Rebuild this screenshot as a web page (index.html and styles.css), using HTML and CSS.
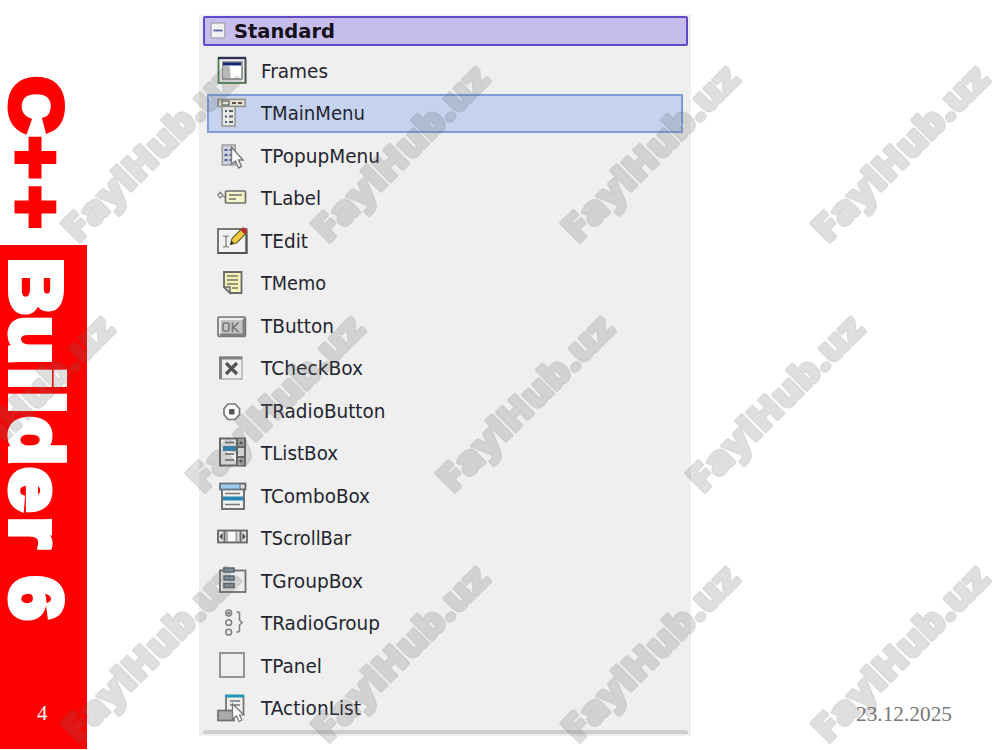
FILE: index.html
```html
<!DOCTYPE html>
<html lang="en">
<head>
<meta charset="utf-8">
<title>C++ Builder 6</title>
<link rel="stylesheet" href="styles.css">
</head>
<body>
<div class="slide">
  <aside class="side">
    <svg class="side-title" width="87" height="660" viewBox="0 0 87 660">
      <g transform="translate(11.300 0) rotate(90)">
        <text class="red" transform="scale(1.060 1)" x="72.300" y="0">C</text>
        <text class="red plus" x="136.300 185.800" y="0">++</text>
        <text class="white" transform="scale(1.080 1)" x="238.800 292.500 340.200 362.400 385.800 433.200 478.700 505 533.500" y="0">Builder 6</text>
      </g>
    </svg>
    <div class="page-no">4</div>
  </aside>
  <main class="palette">
    <div class="head">
      <svg width="16" height="18" viewBox="0 0 16 18"><rect x="1" y="1" width="14" height="15" rx="1" fill="#f1f0f2" stroke="#aaa7b5" stroke-width="1.6"/><path d="M3.5 8.5h9" stroke="#4b62a5" stroke-width="1.7"/></svg>
      <svg width="110" height="28"><text class="head-text" x="0" y="20.5" textLength="101" lengthAdjust="spacingAndGlyphs">Standard</text></svg>
    </div>
    <ul class="list">
      <li class="row">
        <svg class="icon" viewBox="0 0 32 32"><rect x="2.5" y="3" width="27" height="25" fill="#efefef" stroke="#4d7d50" stroke-width="1.8"/><path d="M2 3h28" stroke="#302f55" stroke-width="2.4"/><path d="M29.5 4v24" stroke="#555" stroke-width="1.6"/><rect x="7" y="7" width="19" height="17" fill="#fff" stroke="#777" stroke-width="1.4"/><path d="M7 7.5h18v3H7z" fill="#1d237c"/><path d="M7 11h7v12H7z" fill="#ccc"/></svg>
        <svg class="label"><text x="0" y="22" textLength="67" lengthAdjust="spacingAndGlyphs">Frames</text></svg>
      </li>
      <li class="row selected">
        <svg class="icon" viewBox="0 0 32 32"><rect x="6.2" y="8" width="13" height="20" fill="#e9e9e6" stroke="#999" stroke-width="1.6"/><rect x="2.2" y="1.4" width="27" height="7" fill="#e4e2d4" stroke="#918f86" stroke-width="1.6"/><rect x="6" y="3" width="7" height="4" fill="#d9e7d5" stroke="#59635a" stroke-width="1.2"/><path d="M16 5h4m2 0h4" stroke="#63544b" stroke-width="2"/><path d="M9 13h2m2 0h4M9 18.500h2m2 0h4M9 24h2m2 0h4" stroke="#536071" stroke-width="1.8"/></svg>
        <svg class="label"><text x="0" y="21.4" textLength="104" lengthAdjust="spacingAndGlyphs">TMainMenu</text></svg>
      </li>
      <li class="row">
        <svg class="icon" viewBox="0 0 32 32"><rect x="6.2" y="5" width="13" height="20" fill="#ccd2dc" stroke="#999" stroke-width="1.4"/><path d="M8.500 10h3m2 0h3M8.500 15h3m2 0h3M8.500 20h3m2 0h3" stroke="#4c5d91" stroke-width="2.2"/><path d="M15.500 7v17l4-3 3 7 3-1.500-3-6.500h4.500z" fill="#fafafa" stroke="#777" stroke-width="1.4"/></svg>
        <svg class="label"><text x="0" y="22" textLength="119" lengthAdjust="spacingAndGlyphs">TPopupMenu</text></svg>
      </li>
      <li class="row">
        <svg class="icon" viewBox="0 0 32 32"><path d="M4.300 10.300l2.500 2.800-2.500 2.800-2.500-2.800zM7 14l2 1.500" fill="#eee" stroke="#858585" stroke-width="1.300"/><rect x="9.500" y="9" width="20" height="12" rx="1" fill="#f2f3c8" stroke="#6e6e69" stroke-width="1.700"/><path d="M13 13h13M13 17h7" stroke="#73736a" stroke-width="1.500"/></svg>
        <svg class="label"><text x="0" y="22" textLength="60" lengthAdjust="spacingAndGlyphs">TLabel</text></svg>
      </li>
      <li class="row">
        <svg class="icon" viewBox="0 0 32 32"><rect x="2" y="4" width="28.500" height="24" fill="#f3f3f3" stroke="#777" stroke-width="2"/><path d="M30.500 9v19H2" fill="none" stroke="#555" stroke-width="2"/><path d="M7 11h2l1 1.500 1-1.500h2M7 22h2l1-1.500 1 1.500h2M10 12v9" fill="none" stroke="#777" stroke-width="1.200"/><path d="M14.500 19.500l1.500-6L26 3.500l5 4-10.500 10.500z" fill="#f0cc45" stroke="#6a5c22" stroke-width="1.100"/><path d="M24.500 5l3-3 4.200 3.500-3.200 4z" fill="#b5302c"/><path d="M14.500 19.500l1-3.500 2.500 2z" fill="#222"/></svg>
        <svg class="label"><text x="0" y="22" textLength="47" lengthAdjust="spacingAndGlyphs">TEdit</text></svg>
      </li>
      <li class="row">
        <svg class="icon" viewBox="0 0 32 32"><path d="M8 5h17.500v21H14l-6-6z" fill="#f5f3b9" stroke="#696969" stroke-width="1.800"/><path d="M8 20h6v6z" fill="#ddd" stroke="#696969" stroke-width="1.500"/><path d="M11 9h11M11 13h11M11 17h11M16 21h6" stroke="#777763" stroke-width="1.500"/></svg>
        <svg class="label"><text x="0" y="22" textLength="65" lengthAdjust="spacingAndGlyphs">TMemo</text></svg>
      </li>
      <li class="row">
        <svg class="icon" viewBox="0 0 32 32"><rect x="2" y="7" width="27.500" height="19.500" rx="1" fill="#c3c3c3" stroke="#777" stroke-width="1.600"/><path d="M4 24V9h23" fill="none" stroke="#eee" stroke-width="1.800"/><path d="M28 9v16H4" fill="none" stroke="#808080" stroke-width="3"/><path d="M8 13h4l1 1v6l-1 1H8l-1-1v-6zM16.500 12.500V22M22.500 12.500l-5 4.800 5 4.700" fill="none" stroke="#777" stroke-width="1.600"/></svg>
        <svg class="label"><text x="0" y="22" textLength="73" lengthAdjust="spacingAndGlyphs">TButton</text></svg>
      </li>
      <li class="row">
        <svg class="icon" viewBox="0 0 32 32"><rect x="4" y="5" width="22" height="22" fill="#efefef" stroke="#aaa" stroke-width="1.400"/><path d="M4.500 27V6H26" fill="none" stroke="#808080" stroke-width="3"/><path d="M10 11l11 11M21 11L10 22" stroke="#555" stroke-width="3.300"/></svg>
        <svg class="label"><text x="0" y="22" textLength="102" lengthAdjust="spacingAndGlyphs">TCheckBox</text></svg>
      </li>
      <li class="row">
        <svg class="icon" viewBox="0 0 32 32"><path d="M12 9h7l4.500 4.500v6L19 24.500h-7l-4-5v-6z" fill="#fafafa" stroke="#777" stroke-width="1.700"/><rect x="13" y="14" width="5.500" height="5.500" rx="1" fill="#555"/></svg>
        <svg class="label"><text x="0" y="22" textLength="124.500" lengthAdjust="spacingAndGlyphs">TRadioButton</text></svg>
      </li>
      <li class="row">
        <svg class="icon" viewBox="0 0 32 32"><rect x="4" y="1.500" width="25" height="27" fill="#ededed" stroke="#666" stroke-width="2"/><path d="M21 2v27M21 10h8M21 20h8" stroke="#666" stroke-width="2"/><path d="M22 3h6v6h-6zM22 21h6v6h-6z" fill="#aaa"/><path d="M23 7l2-3 2 3zM23 23h4l-2 3z" fill="#444"/><path d="M9 5.500h9M9 17h9M9 23h9" stroke="#666" stroke-width="1.700"/><path d="M7 9h13v5H7z" fill="#3185b3"/></svg>
        <svg class="label"><text x="0" y="22" textLength="77" lengthAdjust="spacingAndGlyphs">TListBox</text></svg>
      </li>
      <li class="row">
        <svg class="icon" viewBox="0 0 32 32"><rect x="6" y="9" width="22" height="20" fill="#f1f1f1" stroke="#6b6b6b" stroke-width="1.900"/><rect x="4" y="3.500" width="25.500" height="6" fill="#9ac9ed" stroke="#667580" stroke-width="1.800"/><path d="M24 4v5h5V4z" fill="#ddd" stroke="#666"/><path d="M9 13.500h15M9 24.500h15" stroke="#777" stroke-width="1.700"/><path d="M7 16.500h20v4H7z" fill="#2785b4"/></svg>
        <svg class="label"><text x="0" y="22" textLength="109" lengthAdjust="spacingAndGlyphs">TComboBox</text></svg>
      </li>
      <li class="row">
        <svg class="icon" viewBox="0 0 32 32"><rect x="2" y="8.500" width="29" height="12" fill="#ddd" stroke="#666" stroke-width="1.800"/><path d="M8.500 8v13M24.500 8v13" stroke="#666" stroke-width="1.800"/><path d="M6.500 11v7L3.500 14.500zM26.500 11v7l3-3.500z" fill="#444"/><path d="M12 10h7v9h-7z" fill="#fafafa"/><path d="M11 9v11M20.500 9v11" stroke="#999" stroke-width="1.400"/></svg>
        <svg class="label"><text x="0" y="22" textLength="90" lengthAdjust="spacingAndGlyphs">TScrollBar</text></svg>
      </li>
      <li class="row">
        <svg class="icon" viewBox="0 0 32 32"><rect x="4" y="5.500" width="25.500" height="21.500" fill="#ececec" stroke="#707070" stroke-width="1.800"/><path d="M8 3h10v4H8zM8 11h10v4H8zM8 18.500h10v4H8z" fill="#8195a3" stroke="#59636a" stroke-width="1.500"/></svg>
        <svg class="label"><text x="0" y="22" textLength="102" lengthAdjust="spacingAndGlyphs">TGroupBox</text></svg>
      </li>
      <li class="row">
        <svg class="icon" viewBox="0 0 32 32"><g fill="#eee" stroke="#818181" stroke-width="1.500"><circle cx="12.700" cy="6" r="2.900"/><circle cx="12.700" cy="15.600" r="2.900"/><circle cx="12.700" cy="25.200" r="2.900"/></g><circle cx="12.700" cy="6" r="1.600" fill="#777"/><path d="M20.500 5h2l1 1v7l2.500 2.500-2.500 2.500v6l-1 1h-2" fill="none" stroke="#818181" stroke-width="1.600"/></svg>
        <svg class="label"><text x="0" y="22" textLength="119" lengthAdjust="spacingAndGlyphs">TRadioGroup</text></svg>
      </li>
      <li class="row">
        <svg class="icon" viewBox="0 0 32 32"><rect x="4" y="3" width="24" height="24" fill="#efefef" stroke="#858585" stroke-width="1.700"/></svg>
        <svg class="label"><text x="0" y="22" textLength="61" lengthAdjust="spacingAndGlyphs">TPanel</text></svg>
      </li>
      <li class="row">
        <svg class="icon" viewBox="0 0 32 32"><rect x="10" y="4" width="17.500" height="18" fill="#eee" stroke="#777" stroke-width="1.800"/><path d="M9 4h19" stroke="#2694b7" stroke-width="3"/><path d="M14 9h10M14 13h10" stroke="#777" stroke-width="1.500"/><rect x="2" y="18.500" width="16" height="10" fill="#aaa" stroke="#707070" stroke-width="1.700"/><path d="M16.500 12v15l4-3 2.500 5.500 3-1.500-2.500-5H28z" fill="#fafafa" stroke="#777" stroke-width="1.200"/></svg>
        <svg class="label"><text x="0" y="22" textLength="100" lengthAdjust="spacingAndGlyphs">TActionList</text></svg>
      </li>
    </ul>
    <div class="bottom-edge"></div>
  </main>
  <footer class="date"><svg width="110" height="30"><text x="0" y="21" textLength="96" lengthAdjust="spacingAndGlyphs">23.12.2025</text></svg></footer>
  <svg class="marks" width="1000" height="750" viewBox="0 0 1000 750">
    <g class="mark">
      <text transform="translate(159.500 162.500) rotate(-45)" textLength="231" lengthAdjust="spacingAndGlyphs">FaylHub.uz</text>
      <text transform="translate(409.500 162.500) rotate(-45)" textLength="231" lengthAdjust="spacingAndGlyphs">FaylHub.uz</text>
      <text transform="translate(659.500 162.500) rotate(-45)" textLength="231" lengthAdjust="spacingAndGlyphs">FaylHub.uz</text>
      <text transform="translate(909.500 162.500) rotate(-45)" textLength="231" lengthAdjust="spacingAndGlyphs">FaylHub.uz</text>
      <text transform="translate(34.500 412.500) rotate(-45)" textLength="231" lengthAdjust="spacingAndGlyphs">FaylHub.uz</text>
      <text transform="translate(284.500 412.500) rotate(-45)" textLength="231" lengthAdjust="spacingAndGlyphs">FaylHub.uz</text>
      <text transform="translate(534.500 412.500) rotate(-45)" textLength="231" lengthAdjust="spacingAndGlyphs">FaylHub.uz</text>
      <text transform="translate(784.500 412.500) rotate(-45)" textLength="231" lengthAdjust="spacingAndGlyphs">FaylHub.uz</text>
      <text transform="translate(159.500 662.500) rotate(-45)" textLength="231" lengthAdjust="spacingAndGlyphs">FaylHub.uz</text>
      <text transform="translate(409.500 662.500) rotate(-45)" textLength="231" lengthAdjust="spacingAndGlyphs">FaylHub.uz</text>
      <text transform="translate(659.500 662.500) rotate(-45)" textLength="231" lengthAdjust="spacingAndGlyphs">FaylHub.uz</text>
      <text transform="translate(909.500 662.500) rotate(-45)" textLength="231" lengthAdjust="spacingAndGlyphs">FaylHub.uz</text>
    </g>
  </svg>
</div>
</body>
</html>
```
FILE: styles.css
```css
* { box-sizing: border-box; }
body { margin: 0; background: #fff; }
svg { display: block; }
.slide {
  position: relative;
  width: 1000px;
  height: 750px;
  overflow: hidden;
  display: grid;
  grid-template-columns: 199px 491.5px 1fr;
}
.side {
  width: 86.5px;
  height: 749px;
  background: linear-gradient(#fff 245.5px, #f00 245.5px);
}
.side-title { overflow: visible; }
.side-title text {
  font: bold 73px "Liberation Sans", Arial, sans-serif;
  stroke-width: 6px;
}
.side-title .red { fill: #f00; stroke: #f00; }
.side-title .plus { stroke-width: 5px; }
.side-title .white { fill: #fff; stroke: #fff; }
.page-no {
  padding: 41px 0 0 37px;
  color: #fff;
  font: 21px/24px "Liberation Serif", serif;
}
.palette {
  height: 722px;
  margin-top: 14px;
  padding: 2px 2.5px 0 4px;
  background: #efefef;
  border-top: 1px solid #f7f7f7;
}
.head {
  display: flex;
  align-items: center;
  gap: 8px;
  height: 30px;
  margin-top: -1px;
  padding-left: 5px;
  background: #c7bdec;
  border: 2px solid #6149ca;
  border-radius: 2px;
}
.head-text {
  font: bold 20px "DejaVu Sans Condensed", "DejaVu Sans", sans-serif;
  fill: #141018;
}
.list {
  height: 679.5px;
  margin: 3.8px 0 0;
  padding: 0;
  list-style: none;
}
.row {
  display: flex;
  align-items: center;
  gap: 13px;
  height: 42.47px;
  padding-left: 13px;
}
.selected {
  height: 38.47px;
  margin: 2px 5px 2px 4px;
  padding-left: 7px;
  background: #c5d3ef;
  border: 2px solid #7e9dd6;
}
.icon { width: 32px; height: 32px; flex: none; }
.label { width: 150px; height: 30px; flex: none; overflow: visible; }
.label text {
  font: 20px "DejaVu Sans Condensed", "DejaVu Sans", sans-serif;
  fill: #25252f;
}
.bottom-edge {
  height: 4px;
  margin-top: 1px;
  background: #cdcdcd;
  border-radius: 3px 3px 0 0;
}
.date { padding: 700px 0 0 165.5px; }
.date text {
  font: 21px "Liberation Serif", serif;
  fill: #777;
}
.marks {
  position: absolute;
  left: 0;
  top: 0;
}
.mark { opacity: 0.22; }
.mark text {
  font: 800 37.5px "Open Sans", "Noto Sans", sans-serif;
  text-anchor: middle;
  fill: #6c6c6c;
  stroke: #5e5e5e;
  stroke-width: 3.5px;
  stroke-linejoin: round;
  paint-order: stroke;
}
```
